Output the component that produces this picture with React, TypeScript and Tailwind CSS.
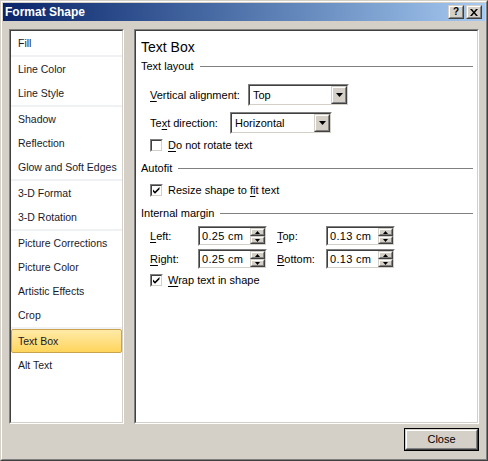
import React from "react";

const font = { fontFamily: '"Liberation Sans", Arial, sans-serif' };

const groups = [
  ["Fill"],
  ["Line Color", "Line Style"],
  ["Shadow", "Reflection", "Glow and Soft Edges"],
  ["3-D Format", "3-D Rotation"],
  ["Picture Corrections", "Picture Color", "Artistic Effects", "Crop"],
  ["Text Box", "Alt Text"],
];

function Sunken({ className, children }: { className?: string; children?: React.ReactNode }) {
  return (
    <div className={"border border-t-[#808080] border-l-[#808080] border-r-white border-b-white " + (className ?? "")}>
      <div className="w-full h-full border border-t-[#404040] border-l-[#404040] border-r-[#d4d0c8] border-b-[#d4d0c8] bg-white flex">
        {children}
      </div>
    </div>
  );
}

function Raised({ className, children }: { className?: string; children?: React.ReactNode }) {
  return (
    <div className={"border border-t-[#d4d0c8] border-l-[#d4d0c8] border-r-[#404040] border-b-[#404040] bg-[#d4d0c8] " + (className ?? "")}>
      <div className="w-full h-full border border-t-white border-l-white border-r-[#808080] border-b-[#808080] flex items-center justify-center">
        {children}
      </div>
    </div>
  );
}

function Combo({ value, className }: { value: string; className: string }) {
  return (
    <Sunken className={"h-[22px] " + className}>
      <div className="flex-1 pl-[3px] flex items-center text-[11px] text-black">{value}</div>
      <Raised className="w-[16px] h-full">
        <svg width="7" height="4" viewBox="0 0 7 4">
          <path d="M0 0h7L3.5 4z" fill="#000" />
        </svg>
      </Raised>
    </Sunken>
  );
}

function Spin({ value }: { value: string }) {
  return (
    <Sunken className="w-[69px] h-[20px]">
      <div className="flex-1 pl-[2px] flex items-center text-[11px] text-black tracking-[0.3px]">{value}</div>
      <div className="w-[15px] flex flex-col">
        <Raised className="h-1/2 w-full">
          <svg width="5" height="3" viewBox="0 0 5 3">
            <path d="M2.5 0L5 3H0z" fill="#000" />
          </svg>
        </Raised>
        <Raised className="h-1/2 w-full">
          <svg width="5" height="3" viewBox="0 0 5 3">
            <path d="M0 0h5L2.5 3z" fill="#000" />
          </svg>
        </Raised>
      </div>
    </Sunken>
  );
}

function Check({ checked, children }: { checked: boolean; children: React.ReactNode }) {
  return (
    <div className="mt-[4px] h-[14px] pl-[14px] flex items-center gap-[5px] text-[11px] text-black">
      <Sunken className="w-[13px] h-[13px]">
        {checked && (
          <svg width="9" height="9" viewBox="0 0 9 9">
            <path d="M1 3.5l2 2 4.5-4.5v2.2L3 7.7l-2-2z" fill="#000" />
          </svg>
        )}
      </Sunken>
      <span>{children}</span>
    </div>
  );
}

function Section({ title, className }: { title: string; className: string }) {
  return (
    <div className={"h-[16px] pl-[5px] pr-[4px] flex items-center gap-[6px] text-[11px] text-black " + className}>
      <span>{title}</span>
      <div className="flex-1 h-px bg-[#808080]" />
    </div>
  );
}

const U = ({ children }: { children: React.ReactNode }) => <u className="underline-offset-2">{children}</u>;

export default function App() {
  return (
    <div style={font} className="w-[488px] h-[461px] border border-t-[#d4d0c8] border-l-[#d4d0c8] border-r-[#404040] border-b-[#404040]">
      <div className="w-full h-full border border-t-white border-l-white border-r-[#808080] border-b-[#808080] bg-[#d4d0c8] p-px flex flex-col">
        {/* title bar */}
        <div className="h-[18px] bg-gradient-to-r from-[#0a246a] to-[#a6caf0] flex items-center pl-[2px] pr-[3px]">
          <span className="text-white font-bold text-[12px] flex-1">Format Shape</span>
          <Raised className="w-[16px] h-[14px] mr-[2px]">
            <span className="text-[10px] font-bold leading-none text-black">?</span>
          </Raised>
          <Raised className="w-[16px] h-[14px]">
            <svg width="8" height="7" viewBox="0 0 8 7">
              <path d="M0 0h2l2 2.5L6 0h2L5 3.5 8 7H6L4 4.5 2 7H0l3-3.5z" fill="#000" />
            </svg>
          </Raised>
        </div>

        <div className="flex-1 flex flex-col pt-[8px] pl-[6px] pr-[6px] pb-[7px]">
          <div className="flex-1 flex gap-[10px]">
            {/* left nav */}
            <Sunken className="w-[115px]">
              <div className="flex-1 flex flex-col text-[10.5px] text-[#1a1a2a]">
                {groups.map((g, gi) => (
                  <div key={gi} className={gi > 0 ? "border-t-2 border-[#f0f1f5]" : ""}>
                    {g.map((item) =>
                      item === "Text Box" ? (
                        <div key={item} className="h-[24px] flex items-center pl-[6px] pt-px rounded-[2px] border border-[#c9a34e] bg-gradient-to-b from-[#ffeaa6] to-[#ffd55a]">
                          {item}
                        </div>
                      ) : (
                        <div key={item} className="h-[24px] flex items-center pl-[7px] pt-px">
                          {item}
                        </div>
                      )
                    )}
                  </div>
                ))}
              </div>
            </Sunken>

            {/* right content */}
            <Sunken className="flex-1">
              <div className="flex-1 flex flex-col pt-[8px]">
                <div className="h-[16px] pl-[5px] text-[14px] leading-[16px] text-black">Text Box</div>
                <Section title="Text layout" className="mt-[3px]" />
                <div className="mt-[10px] h-[22px] pl-[14px] flex items-center text-[11px] text-black">
                  <span className="w-[98px]"><U>V</U>ertical alignment:</span>
                  <Combo value="Top" className="w-[101px]" />
                </div>
                <div className="mt-[6px] h-[22px] pl-[14px] flex items-center text-[11px] text-black">
                  <span className="w-[80px]">Te<U>x</U>t direction:</span>
                  <Combo value="Horizontal" className="w-[102px]" />
                </div>
                <Check checked={false}>
                  <U>D</U>o not rotate text
                </Check>
                <Section title="Autofit" className="mt-[8px]" />
                <div className="mt-[3px]">
                  <Check checked={true}>
                    Resize shape to <U>fi</U>t text
                  </Check>
                </div>
                <Section title="Internal margin" className="mt-[8px]" />
                <div className="mt-[5px] h-[20px] pl-[14px] flex items-center text-[11px] text-black">
                  <span className="w-[48px]"><U>L</U>eft:</span>
                  <Spin value="0.25 cm" />
                  <span className="w-[49px] ml-[10px]"><U>T</U>op:</span>
                  <Spin value="0.13 cm" />
                </div>
                <div className="mt-[3px] h-[20px] pl-[14px] flex items-center text-[11px] text-black">
                  <span className="w-[48px]"><U>R</U>ight:</span>
                  <Spin value="0.25 cm" />
                  <span className="w-[49px] ml-[10px]"><U>B</U>ottom:</span>
                  <Spin value="0.13 cm" />
                </div>
                <Check checked={true}>
                  <U>W</U>rap text in shape
                </Check>
              </div>
            </Sunken>
          </div>

          <div className="mt-[4px] flex justify-end">
            <div className="border border-black w-[75px] h-[23px]">
              <Raised className="w-full h-full">
                <span className="text-[11px] text-black">Close</span>
              </Raised>
            </div>
          </div>
        </div>
      </div>
    </div>
  );
}
